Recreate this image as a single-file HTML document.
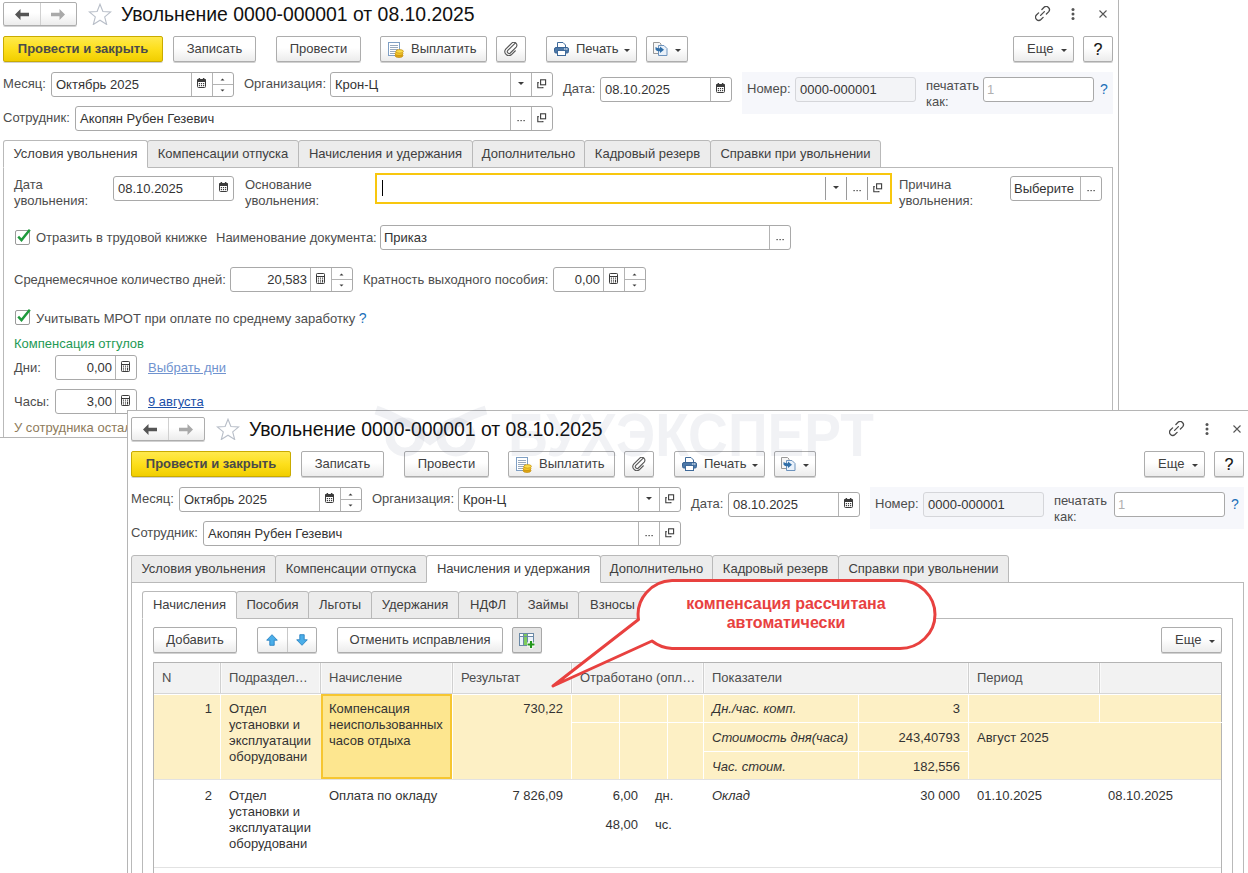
<!DOCTYPE html><html><head><meta charset="utf-8"><style>
*{margin:0;padding:0}
svg{display:block}
html,body{width:1248px;height:873px;overflow:hidden;background:#fff}
body{position:relative;font-family:"Liberation Sans",sans-serif;font-size:13px;color:#333}
.a{position:absolute}
.t{position:absolute;white-space:nowrap;line-height:16px;color:#4d4d4d}
.title{font-size:19.4px;line-height:22px;color:#111}
.btn{position:absolute;box-sizing:border-box;border:1px solid #adadad;border-radius:2px;background:linear-gradient(#fff 0%,#fff 45%,#ececec 100%);box-shadow:0 1px 0 rgba(0,0,0,.18);display:flex;align-items:center;justify-content:center;color:#404040;white-space:nowrap;line-height:16px}
.btn.yel{background:linear-gradient(#ffe94d 0%,#fddf1c 50%,#f1ce00 100%);border-color:#c9ab00;font-weight:bold;color:#4a4a4a}
.btn.q{color:#111;font-size:16px;padding-top:2px;-webkit-text-stroke:0.15px #111}
.fld{position:absolute;box-sizing:border-box;border:1px solid #a9a9a9;border-radius:3px;background:#fff}
.fld.ro{background:#f3f4f7;border-color:#d5d6da}
.ft{position:absolute;display:flex;align-items:center;padding-top:1px;box-sizing:border-box;white-space:nowrap;color:#333;line-height:16px}
.ic{position:absolute;display:flex;align-items:center;justify-content:center}
.lbl{color:#4d4d4d}
.qm{color:#1b6fb8;font-size:14px}
.tab{position:absolute;box-sizing:border-box;border:1px solid #b9b9b9;border-radius:3px 3px 0 0;background:#ececec;display:flex;align-items:center;justify-content:center;color:#404040;white-space:nowrap;padding-bottom:1px}
.tab.act{background:#fff;border-bottom-color:#fff;z-index:2}
.lnk{color:#1a4fa8;text-decoration:underline}
.lnk2{color:#7093cf;text-decoration:underline}
.green{color:#1e9a55}
.tan{color:#8e7b5b}
.hd{color:#4d4d4d}
.bt{color:#404040}
.cell{color:#333}
.it{font-style:italic}
.dda{display:inline-flex;margin-left:8px;width:7px;height:4px}
.btn.pressed{background:#e4e4e4;border-color:#a8a8a8;border-radius:2px}
</style></head><body>
<div class="btn " style="left:3px;top:2px;width:74px;height:24px;"></div>
<div class="a" style="left:40px;top:3px;width:1px;height:22px;background:#d0d0d0"></div>
<div class="a " style="left:15px;top:9px;width:15px;height:11px;"><svg width="15" height="11" viewBox="0 0 15 11"><path d="M0 5.5L5.5 0v3.8H14v3.4H5.5V11z" fill="#555"/></svg></div>
<div class="a " style="left:50px;top:9px;width:15px;height:11px;"><svg width="15" height="11" viewBox="0 0 15 11"><path d="M15 5.5L9.5 0v3.8H1v3.4h8.5V11z" fill="#a9a9a9"/></svg></div>
<div class="a " style="left:88px;top:3px;width:24px;height:22px;"><svg width="24" height="22" viewBox="0 0 24 22"><path d="M12 1.2l2.9 7.3 7.8.4-6 5 2 7.6L12 17.2l-6.7 4.3 2-7.6-6-5 7.8-.4z" fill="none" stroke="#b8bec8" stroke-width="1.1"/></svg></div>
<div class="t title" style="left:121px;top:3px;">Увольнение 0000-000001 от 08.10.2025</div>
<div class="a " style="left:1035px;top:6px;width:16px;height:16px;"><svg width="16" height="16" viewBox="0 0 16 16"><g fill="none" stroke="#4a4a4a" stroke-width="1.3" stroke-linecap="round"><path d="M6.9 3.5L9.04 1.34A3.2 3.2 0 0 1 13.56 5.86L11.4 8"/><path d="M8.1 11.4L5.96 13.56A3.2 3.2 0 0 1 1.44 9.04L3.6 6.9"/><path d="M5.6 9.4L9.4 5.6"/></g></svg></div>
<div class="a " style="left:1071px;top:8px;width:4px;height:12px;"><svg width="4" height="12" viewBox="0 0 4 12"><g fill="#555"><circle cx="2" cy="1.6" r="1.5"/><circle cx="2" cy="6" r="1.5"/><circle cx="2" cy="10.4" r="1.5"/></g></svg></div>
<div class="a " style="left:1099px;top:10px;width:8px;height:8px;"><svg width="8" height="8" viewBox="0 0 8 8"><path d="M0.5 0.5l7 7M7.5 0.5l-7 7" stroke="#555" stroke-width="1.1"/></svg></div>
<div class="btn yel" style="left:3px;top:36px;width:160px;height:26px;">Провести и закрыть</div>
<div class="btn " style="left:173px;top:36px;width:83px;height:26px;">Записать</div>
<div class="btn " style="left:276px;top:36px;width:85px;height:26px;">Провести</div>
<div class="btn " style="left:380px;top:36px;width:107px;height:26px;"></div>
<div class="a " style="left:387px;top:42px;width:17px;height:16px;"><svg width="17" height="16" viewBox="0 0 17 16"><rect x="1.5" y="0.5" width="11" height="13" fill="#fff" stroke="#7f9fc4"/><g stroke="#98a9bd" stroke-width="1"><path d="M3 3.5h8M3 5.5h8M3 7.5h8M3 9.5h7M3 11.5h6"/></g><g stroke="#c08a0c" stroke-width=".7"><ellipse cx="12" cy="13.6" rx="4" ry="1.9" fill="#e0a815"/><ellipse cx="12" cy="11.6" rx="4" ry="1.9" fill="#f5c92a"/><ellipse cx="12.6" cy="9.4" rx="3.8" ry="1.8" fill="#fbdc4a"/></g></svg></div>
<div class="t bt" style="left:411px;top:41px;">Выплатить</div>
<div class="btn " style="left:496px;top:36px;width:30px;height:26px;"><svg width="14" height="14" viewBox="0 0 14 14"><path d="M11.5 0.8L3.6 8.7a1.8 1.8 0 0 0 2.5 2.5l6.1-6.1a3 3 0 0 0-4.2-4.2L1.7 7.2a4 4 0 0 0 5.6 5.6l4.3-4.3" fill="none" stroke="#555" stroke-width="1.1"/></svg></div>
<div class="btn " style="left:546px;top:36px;width:91px;height:26px;"></div>
<div class="a " style="left:554px;top:42px;width:15px;height:14px;"><svg width="15" height="14" viewBox="0 0 15 14"><path d="M3.5 5V0.5h5.5l2.5 2.5V5" fill="#fff" stroke="#3f6a9a"/><rect x="0.5" y="5.5" width="14" height="5.5" rx="1.5" fill="#4c78a8" stroke="#3a6494"/><rect x="3.5" y="8.5" width="8" height="5" fill="#fff" stroke="#3f6a9a"/><rect x="10" y="6.5" width="1.5" height="1" fill="#fff"/><rect x="12" y="6.5" width="1.5" height="1" fill="#fff"/></svg></div>
<div class="t bt" style="left:576px;top:41px;">Печать</div>
<div class="a " style="left:624px;top:49px;width:6px;height:3px;"><svg width="6" height="3" viewBox="0 0 6 3"><path d="M0 0h6L3 3z" fill="#3c3c3c"/></svg></div>
<div class="btn " style="left:646px;top:36px;width:42px;height:26px;"></div>
<div class="a " style="left:653px;top:42px;width:15px;height:14px;"><svg width="15" height="14" viewBox="0 0 15 14"><path d="M0.5 0.5h6l1.5 1.5v9.5h-7.5z" fill="#f6f6f6" stroke="#999"/><path d="M5.5 3.5h5.5l3 3v7h-8.5z" fill="#e9f1fa" stroke="#6d93bd"/><path d="M2.5 7.5c1 1.5 2.5 1.8 4.5 1.8V11l4-3.2-4-3.2v1.6c-1.6 0-3.2-.5-4.5-1.3z" fill="#2f6ea8"/></svg></div>
<div class="a " style="left:675px;top:49px;width:6px;height:3px;"><svg width="6" height="3" viewBox="0 0 6 3"><path d="M0 0h6L3 3z" fill="#3c3c3c"/></svg></div>
<div class="btn " style="left:1013px;top:36px;width:61px;height:26px;"></div>
<div class="t bt" style="left:1027px;top:41px;">Еще</div>
<div class="a " style="left:1061px;top:49px;width:6px;height:3px;"><svg width="6" height="3" viewBox="0 0 6 3"><path d="M0 0h6L3 3z" fill="#3c3c3c"/></svg></div>
<div class="btn q" style="left:1083px;top:36px;width:30px;height:26px;">?</div>
<div class="t lbl" style="left:3px;top:76px;">Месяц:</div>
<div class="fld " style="left:51px;top:72px;width:183px;height:25px;"></div>
<div class="a" style="left:191px;top:73px;width:1px;height:23px;background:#b3b3b3"></div>
<div class="a" style="left:212px;top:73px;width:1px;height:23px;background:#b3b3b3"></div>
<div class="ft" style="left:56px;top:72px;height:25px;">Октябрь 2025</div>
<div class="a " style="left:197px;top:78px;width:9px;height:10px;"><svg width="9" height="10" viewBox="0 0 9 10"><rect x="0.5" y="1.5" width="8" height="8" rx="1" fill="#fff" stroke="#3c3c3c"/><rect x="0" y="1" width="9" height="3" rx="1" fill="#3c3c3c"/><rect x="1.6" y="0" width="1.5" height="1.6" fill="#3c3c3c"/><rect x="5.9" y="0" width="1.5" height="1.6" fill="#3c3c3c"/><g fill="#3c3c3c"><rect x="1.8" y="5" width="1.2" height="1.2"/><rect x="3.9" y="5" width="1.2" height="1.2"/><rect x="6" y="5" width="1.2" height="1.2"/><rect x="1.8" y="7" width="1.2" height="1.2"/><rect x="3.9" y="7" width="1.2" height="1.2"/><rect x="6" y="7" width="1.2" height="1.2"/></g></svg></div>
<div class="a" style="left:213px;top:84px;width:20px;height:1px;background:#b3b3b3"></div>
<div class="a " style="left:220px;top:78px;width:5px;height:3px;"><svg width="5" height="3" viewBox="0 0 5 3"><path d="M0.5 2.6h4L2.5 0.4z" fill="#3c3c3c"/></svg></div>
<div class="a " style="left:220px;top:89px;width:5px;height:3px;"><svg width="5" height="3" viewBox="0 0 5 3"><path d="M0.5 0.4h4L2.5 2.6z" fill="#3c3c3c"/></svg></div>
<div class="t lbl" style="left:244px;top:76px;">Организация:</div>
<div class="fld " style="left:330px;top:72px;width:223px;height:25px;"></div>
<div class="a" style="left:510px;top:73px;width:1px;height:23px;background:#b3b3b3"></div>
<div class="a" style="left:531px;top:73px;width:1px;height:23px;background:#b3b3b3"></div>
<div class="ft" style="left:335px;top:72px;height:25px;">Крон-Ц</div>
<div class="a " style="left:518px;top:82px;width:6px;height:3px;"><svg width="6" height="3" viewBox="0 0 6 3"><path d="M0 0h6L3 3z" fill="#3c3c3c"/></svg></div>
<div class="a " style="left:537px;top:79px;width:10px;height:10px;"><svg width="10" height="10" viewBox="0 0 10 10"><path d="M1.8 3.6H0.8V8.8H5.9V7.9" fill="none" stroke="#3c3c3c" stroke-width="1.1"/><rect x="3.6" y="0.8" width="5" height="5" fill="none" stroke="#3c3c3c" stroke-width="1.1"/></svg></div>
<div class="t lbl" style="left:563px;top:81px;">Дата:</div>
<div class="fld " style="left:600px;top:77px;width:132px;height:25px;"></div>
<div class="a" style="left:710px;top:78px;width:1px;height:23px;background:#b3b3b3"></div>
<div class="ft" style="left:605px;top:77px;height:25px;">08.10.2025</div>
<div class="a " style="left:716px;top:83px;width:9px;height:10px;"><svg width="9" height="10" viewBox="0 0 9 10"><rect x="0.5" y="1.5" width="8" height="8" rx="1" fill="#fff" stroke="#3c3c3c"/><rect x="0" y="1" width="9" height="3" rx="1" fill="#3c3c3c"/><rect x="1.6" y="0" width="1.5" height="1.6" fill="#3c3c3c"/><rect x="5.9" y="0" width="1.5" height="1.6" fill="#3c3c3c"/><g fill="#3c3c3c"><rect x="1.8" y="5" width="1.2" height="1.2"/><rect x="3.9" y="5" width="1.2" height="1.2"/><rect x="6" y="5" width="1.2" height="1.2"/><rect x="1.8" y="7" width="1.2" height="1.2"/><rect x="3.9" y="7" width="1.2" height="1.2"/><rect x="6" y="7" width="1.2" height="1.2"/></g></svg></div>
<div class="a " style="left:742px;top:72px;width:371px;height:42px;background:#f6f7fb"></div>
<div class="t lbl" style="left:747px;top:81px;">Номер:</div>
<div class="fld ro" style="left:795px;top:77px;width:121px;height:25px;"></div>
<div class="ft" style="left:800px;top:77px;height:25px;">0000-000001</div>
<div class="t lbl" style="left:926px;top:78px;line-height:16px">печатать<br>как:</div>
<div class="fld " style="left:983px;top:77px;width:111px;height:25px;"></div>
<div class="ft" style="left:987px;top:77px;height:25px;color:#b0b0b0;">1</div>
<div class="t qm" style="left:1100px;top:81px;">?</div>
<div class="t lbl" style="left:3px;top:110px;">Сотрудник:</div>
<div class="fld " style="left:75px;top:106px;width:478px;height:25px;"></div>
<div class="a" style="left:510px;top:107px;width:1px;height:23px;background:#b3b3b3"></div>
<div class="a" style="left:531px;top:107px;width:1px;height:23px;background:#b3b3b3"></div>
<div class="ft" style="left:80px;top:106px;height:25px;">Акопян Рубен Гезевич</div>
<div class="a " style="left:516px;top:119px;width:10px;height:3px;"><svg width="10" height="3" viewBox="0 0 10 3"><g fill="#333"><rect x="1.5" y="1" width="1.2" height="1.2"/><rect x="4.5" y="1" width="1.2" height="1.2"/><rect x="7.5" y="1" width="1.2" height="1.2"/></g></svg></div>
<div class="a " style="left:537px;top:113px;width:10px;height:10px;"><svg width="10" height="10" viewBox="0 0 10 10"><path d="M1.8 3.6H0.8V8.8H5.9V7.9" fill="none" stroke="#3c3c3c" stroke-width="1.1"/><rect x="3.6" y="0.8" width="5" height="5" fill="none" stroke="#3c3c3c" stroke-width="1.1"/></svg></div>
<div class="tab act" style="left:3px;top:140px;width:145px;height:28px">Условия увольнения</div>
<div class="tab" style="left:147px;top:140px;width:152px;height:28px">Компенсации отпуска</div>
<div class="tab" style="left:298px;top:140px;width:175px;height:28px">Начисления и удержания</div>
<div class="tab" style="left:472px;top:140px;width:113px;height:28px">Дополнительно</div>
<div class="tab" style="left:584px;top:140px;width:127px;height:28px">Кадровый резерв</div>
<div class="tab" style="left:710px;top:140px;width:171px;height:28px">Справки при увольнении</div>
<div class="a" style="left:1118px;top:0px;width:1px;height:411px;background:#b5b5b5"></div>
<div class="a" style="left:3px;top:167px;width:1110px;height:300px;box-sizing:border-box;border:1px solid #b9b9b9;border-bottom:none"></div>
<div class="t lbl" style="left:14px;top:177px;">Дата<br>увольнения:</div>
<div class="fld " style="left:113px;top:176px;width:121px;height:25px;"></div>
<div class="a" style="left:213px;top:177px;width:1px;height:23px;background:#b3b3b3"></div>
<div class="ft" style="left:118px;top:176px;height:25px;">08.10.2025</div>
<div class="a " style="left:219px;top:182px;width:9px;height:10px;"><svg width="9" height="10" viewBox="0 0 9 10"><rect x="0.5" y="1.5" width="8" height="8" rx="1" fill="#fff" stroke="#3c3c3c"/><rect x="0" y="1" width="9" height="3" rx="1" fill="#3c3c3c"/><rect x="1.6" y="0" width="1.5" height="1.6" fill="#3c3c3c"/><rect x="5.9" y="0" width="1.5" height="1.6" fill="#3c3c3c"/><g fill="#3c3c3c"><rect x="1.8" y="5" width="1.2" height="1.2"/><rect x="3.9" y="5" width="1.2" height="1.2"/><rect x="6" y="5" width="1.2" height="1.2"/><rect x="1.8" y="7" width="1.2" height="1.2"/><rect x="3.9" y="7" width="1.2" height="1.2"/><rect x="6" y="7" width="1.2" height="1.2"/></g></svg></div>
<div class="t lbl" style="left:245px;top:177px;">Основание<br>увольнения:</div>
<div class="a" style="left:375px;top:173px;width:517px;height:31px;box-sizing:border-box;border:2px solid #f8c70e;background:#fff"></div>
<div class="a" style="left:825px;top:177px;width:1px;height:23px;background:#9a9a9a"></div>
<div class="a" style="left:846px;top:177px;width:1px;height:23px;background:#9a9a9a"></div>
<div class="a" style="left:867px;top:177px;width:1px;height:23px;background:#9a9a9a"></div>
<div class="a" style="left:382px;top:180px;width:1px;height:16px;background:#000"></div>
<div class="a " style="left:833px;top:186px;width:6px;height:3px;"><svg width="6" height="3" viewBox="0 0 6 3"><path d="M0 0h6L3 3z" fill="#3c3c3c"/></svg></div>
<div class="a " style="left:852px;top:189px;width:10px;height:3px;"><svg width="10" height="3" viewBox="0 0 10 3"><g fill="#333"><rect x="1.5" y="1" width="1.2" height="1.2"/><rect x="4.5" y="1" width="1.2" height="1.2"/><rect x="7.5" y="1" width="1.2" height="1.2"/></g></svg></div>
<div class="a " style="left:873px;top:183px;width:10px;height:10px;"><svg width="10" height="10" viewBox="0 0 10 10"><path d="M1.8 3.6H0.8V8.8H5.9V7.9" fill="none" stroke="#3c3c3c" stroke-width="1.1"/><rect x="3.6" y="0.8" width="5" height="5" fill="none" stroke="#3c3c3c" stroke-width="1.1"/></svg></div>
<div class="t lbl" style="left:899px;top:177px;">Причина<br>увольнения:</div>
<div class="fld " style="left:1010px;top:176px;width:92px;height:25px;"></div>
<div class="a" style="left:1080px;top:177px;width:1px;height:23px;background:#b3b3b3"></div>
<div class="ft" style="left:1014px;top:176px;height:25px;">Выберите</div>
<div class="a " style="left:1086px;top:189px;width:10px;height:3px;"><svg width="10" height="3" viewBox="0 0 10 3"><g fill="#333"><rect x="1.5" y="1" width="1.2" height="1.2"/><rect x="4.5" y="1" width="1.2" height="1.2"/><rect x="7.5" y="1" width="1.2" height="1.2"/></g></svg></div>
<div class="a " style="left:15px;top:228px;width:17px;height:17px;"><svg width="17" height="17" viewBox="0 0 17 17"><rect x="0.5" y="2.5" width="14" height="14" rx="1.5" fill="#fff" stroke="#9a9a9a"/><path d="M3.2 8.6l3.3 3.5L14.8 1.8" fill="none" stroke="#1e9a3c" stroke-width="2.4"/></svg></div>
<div class="t lbl" style="left:36px;top:230px;">Отразить в трудовой книжке</div>
<div class="t lbl" style="left:216px;top:230px;">Наименование документа:</div>
<div class="fld " style="left:380px;top:225px;width:411px;height:25px;"></div>
<div class="a" style="left:769px;top:226px;width:1px;height:23px;background:#b3b3b3"></div>
<div class="ft" style="left:384px;top:225px;height:25px;">Приказ</div>
<div class="a " style="left:775px;top:238px;width:10px;height:3px;"><svg width="10" height="3" viewBox="0 0 10 3"><g fill="#333"><rect x="1.5" y="1" width="1.2" height="1.2"/><rect x="4.5" y="1" width="1.2" height="1.2"/><rect x="7.5" y="1" width="1.2" height="1.2"/></g></svg></div>
<div class="t lbl" style="left:14px;top:272px;">Среднемесячное количество дней:</div>
<div class="fld " style="left:230px;top:267px;width:123px;height:25px;"></div>
<div class="a" style="left:310px;top:268px;width:1px;height:23px;background:#b3b3b3"></div>
<div class="a" style="left:331px;top:268px;width:1px;height:23px;background:#b3b3b3"></div>
<div class="ft" style="left:231px;width:76px;top:267px;height:25px;justify-content:flex-end;">20,583</div>
<div class="a " style="left:316px;top:273px;width:9px;height:11px;"><svg width="9" height="11" viewBox="0 0 9 11"><rect x="0.5" y="0.5" width="8" height="10" rx="0.8" fill="#fff" stroke="#3c3c3c"/><path d="M1 3.5h7" stroke="#3c3c3c"/><g fill="#3c3c3c"><rect x="1.9" y="4.6" width="1.1" height="1.1"/><rect x="3.95" y="4.6" width="1.1" height="1.1"/><rect x="6" y="4.6" width="1.1" height="1.1"/><rect x="1.9" y="6.6" width="1.1" height="1.1"/><rect x="3.95" y="6.6" width="1.1" height="1.1"/><rect x="1.9" y="8.4" width="1.1" height="1.1"/><rect x="3.95" y="8.4" width="1.1" height="1.1"/><rect x="6" y="6.6" width="1.1" height="2.9"/></g></svg></div>
<div class="a" style="left:332px;top:279px;width:20px;height:1px;background:#b3b3b3"></div>
<div class="a " style="left:339px;top:273px;width:5px;height:3px;"><svg width="5" height="3" viewBox="0 0 5 3"><path d="M0.5 2.6h4L2.5 0.4z" fill="#3c3c3c"/></svg></div>
<div class="a " style="left:339px;top:284px;width:5px;height:3px;"><svg width="5" height="3" viewBox="0 0 5 3"><path d="M0.5 0.4h4L2.5 2.6z" fill="#3c3c3c"/></svg></div>
<div class="t lbl" style="left:363px;top:272px;">Кратность выходного пособия:</div>
<div class="fld " style="left:553px;top:267px;width:93px;height:25px;"></div>
<div class="a" style="left:603px;top:268px;width:1px;height:23px;background:#b3b3b3"></div>
<div class="a" style="left:624px;top:268px;width:1px;height:23px;background:#b3b3b3"></div>
<div class="ft" style="left:554px;width:46px;top:267px;height:25px;justify-content:flex-end;">0,00</div>
<div class="a " style="left:609px;top:273px;width:9px;height:11px;"><svg width="9" height="11" viewBox="0 0 9 11"><rect x="0.5" y="0.5" width="8" height="10" rx="0.8" fill="#fff" stroke="#3c3c3c"/><path d="M1 3.5h7" stroke="#3c3c3c"/><g fill="#3c3c3c"><rect x="1.9" y="4.6" width="1.1" height="1.1"/><rect x="3.95" y="4.6" width="1.1" height="1.1"/><rect x="6" y="4.6" width="1.1" height="1.1"/><rect x="1.9" y="6.6" width="1.1" height="1.1"/><rect x="3.95" y="6.6" width="1.1" height="1.1"/><rect x="1.9" y="8.4" width="1.1" height="1.1"/><rect x="3.95" y="8.4" width="1.1" height="1.1"/><rect x="6" y="6.6" width="1.1" height="2.9"/></g></svg></div>
<div class="a" style="left:625px;top:279px;width:20px;height:1px;background:#b3b3b3"></div>
<div class="a " style="left:632px;top:273px;width:5px;height:3px;"><svg width="5" height="3" viewBox="0 0 5 3"><path d="M0.5 2.6h4L2.5 0.4z" fill="#3c3c3c"/></svg></div>
<div class="a " style="left:632px;top:284px;width:5px;height:3px;"><svg width="5" height="3" viewBox="0 0 5 3"><path d="M0.5 0.4h4L2.5 2.6z" fill="#3c3c3c"/></svg></div>
<div class="a " style="left:15px;top:308px;width:17px;height:17px;"><svg width="17" height="17" viewBox="0 0 17 17"><rect x="0.5" y="2.5" width="14" height="14" rx="1.5" fill="#fff" stroke="#9a9a9a"/><path d="M3.2 8.6l3.3 3.5L14.8 1.8" fill="none" stroke="#1e9a3c" stroke-width="2.4"/></svg></div>
<div class="t lbl" style="left:36px;top:310px;">Учитывать МРОТ при оплате по среднему заработку <span class="qm">?</span></div>
<div class="t green" style="left:14px;top:336px;">Компенсация отгулов</div>
<div class="t lbl" style="left:14px;top:360px;">Дни:</div>
<div class="fld " style="left:55px;top:355px;width:82px;height:25px;"></div>
<div class="a" style="left:115px;top:356px;width:1px;height:23px;background:#b3b3b3"></div>
<div class="ft" style="left:56px;width:56px;top:355px;height:25px;justify-content:flex-end;">0,00</div>
<div class="a " style="left:121px;top:361px;width:9px;height:11px;"><svg width="9" height="11" viewBox="0 0 9 11"><rect x="0.5" y="0.5" width="8" height="10" rx="0.8" fill="#fff" stroke="#3c3c3c"/><path d="M1 3.5h7" stroke="#3c3c3c"/><g fill="#3c3c3c"><rect x="1.9" y="4.6" width="1.1" height="1.1"/><rect x="3.95" y="4.6" width="1.1" height="1.1"/><rect x="6" y="4.6" width="1.1" height="1.1"/><rect x="1.9" y="6.6" width="1.1" height="1.1"/><rect x="3.95" y="6.6" width="1.1" height="1.1"/><rect x="1.9" y="8.4" width="1.1" height="1.1"/><rect x="3.95" y="8.4" width="1.1" height="1.1"/><rect x="6" y="6.6" width="1.1" height="2.9"/></g></svg></div>
<div class="t lnk2" style="left:148px;top:360px;">Выбрать дни</div>
<div class="t lbl" style="left:14px;top:394px;">Часы:</div>
<div class="fld " style="left:55px;top:389px;width:82px;height:25px;"></div>
<div class="a" style="left:115px;top:390px;width:1px;height:23px;background:#b3b3b3"></div>
<div class="ft" style="left:56px;width:56px;top:389px;height:25px;justify-content:flex-end;">3,00</div>
<div class="a " style="left:121px;top:395px;width:9px;height:11px;"><svg width="9" height="11" viewBox="0 0 9 11"><rect x="0.5" y="0.5" width="8" height="10" rx="0.8" fill="#fff" stroke="#3c3c3c"/><path d="M1 3.5h7" stroke="#3c3c3c"/><g fill="#3c3c3c"><rect x="1.9" y="4.6" width="1.1" height="1.1"/><rect x="3.95" y="4.6" width="1.1" height="1.1"/><rect x="6" y="4.6" width="1.1" height="1.1"/><rect x="1.9" y="6.6" width="1.1" height="1.1"/><rect x="3.95" y="6.6" width="1.1" height="1.1"/><rect x="1.9" y="8.4" width="1.1" height="1.1"/><rect x="3.95" y="8.4" width="1.1" height="1.1"/><rect x="6" y="6.6" width="1.1" height="2.9"/></g></svg></div>
<div class="t lnk" style="left:148px;top:394px;">9 августа</div>
<div class="t tan" style="left:14px;top:420px;">У сотрудника остались неиспользованные часы</div>
<div class="a" style="left:0px;top:437px;width:1119px;height:1px;background:#b5b5b5"></div>
<div class="a" style="left:0;top:438px;width:1248px;height:435px;background:#fff"></div>
<div class="a" style="left:127px;top:410px;width:1121px;height:463px;background:#fff;box-sizing:border-box;border-left:1px solid #b5b5b5;border-top:1px solid #b5b5b5"></div>
<div class="btn " style="left:131px;top:417px;width:74px;height:24px;"></div>
<div class="a" style="left:168px;top:418px;width:1px;height:22px;background:#d0d0d0"></div>
<div class="a " style="left:143px;top:424px;width:15px;height:11px;"><svg width="15" height="11" viewBox="0 0 15 11"><path d="M0 5.5L5.5 0v3.8H14v3.4H5.5V11z" fill="#555"/></svg></div>
<div class="a " style="left:178px;top:424px;width:15px;height:11px;"><svg width="15" height="11" viewBox="0 0 15 11"><path d="M15 5.5L9.5 0v3.8H1v3.4h8.5V11z" fill="#a9a9a9"/></svg></div>
<div class="a " style="left:216px;top:418px;width:24px;height:22px;"><svg width="24" height="22" viewBox="0 0 24 22"><path d="M12 1.2l2.9 7.3 7.8.4-6 5 2 7.6L12 17.2l-6.7 4.3 2-7.6-6-5 7.8-.4z" fill="none" stroke="#b8bec8" stroke-width="1.1"/></svg></div>
<div class="t title" style="left:249px;top:418px;">Увольнение 0000-000001 от 08.10.2025</div>
<div class="a " style="left:1169px;top:421px;width:16px;height:16px;"><svg width="16" height="16" viewBox="0 0 16 16"><g fill="none" stroke="#4a4a4a" stroke-width="1.3" stroke-linecap="round"><path d="M6.9 3.5L9.04 1.34A3.2 3.2 0 0 1 13.56 5.86L11.4 8"/><path d="M8.1 11.4L5.96 13.56A3.2 3.2 0 0 1 1.44 9.04L3.6 6.9"/><path d="M5.6 9.4L9.4 5.6"/></g></svg></div>
<div class="a " style="left:1205px;top:423px;width:4px;height:12px;"><svg width="4" height="12" viewBox="0 0 4 12"><g fill="#555"><circle cx="2" cy="1.6" r="1.5"/><circle cx="2" cy="6" r="1.5"/><circle cx="2" cy="10.4" r="1.5"/></g></svg></div>
<div class="a " style="left:1233px;top:425px;width:8px;height:8px;"><svg width="8" height="8" viewBox="0 0 8 8"><path d="M0.5 0.5l7 7M7.5 0.5l-7 7" stroke="#555" stroke-width="1.1"/></svg></div>
<div class="btn yel" style="left:131px;top:451px;width:160px;height:26px;">Провести и закрыть</div>
<div class="btn " style="left:301px;top:451px;width:83px;height:26px;">Записать</div>
<div class="btn " style="left:404px;top:451px;width:85px;height:26px;">Провести</div>
<div class="btn " style="left:508px;top:451px;width:107px;height:26px;"></div>
<div class="a " style="left:515px;top:457px;width:17px;height:16px;"><svg width="17" height="16" viewBox="0 0 17 16"><rect x="1.5" y="0.5" width="11" height="13" fill="#fff" stroke="#7f9fc4"/><g stroke="#98a9bd" stroke-width="1"><path d="M3 3.5h8M3 5.5h8M3 7.5h8M3 9.5h7M3 11.5h6"/></g><g stroke="#c08a0c" stroke-width=".7"><ellipse cx="12" cy="13.6" rx="4" ry="1.9" fill="#e0a815"/><ellipse cx="12" cy="11.6" rx="4" ry="1.9" fill="#f5c92a"/><ellipse cx="12.6" cy="9.4" rx="3.8" ry="1.8" fill="#fbdc4a"/></g></svg></div>
<div class="t bt" style="left:539px;top:456px;">Выплатить</div>
<div class="btn " style="left:624px;top:451px;width:30px;height:26px;"><svg width="14" height="14" viewBox="0 0 14 14"><path d="M11.5 0.8L3.6 8.7a1.8 1.8 0 0 0 2.5 2.5l6.1-6.1a3 3 0 0 0-4.2-4.2L1.7 7.2a4 4 0 0 0 5.6 5.6l4.3-4.3" fill="none" stroke="#555" stroke-width="1.1"/></svg></div>
<div class="btn " style="left:674px;top:451px;width:91px;height:26px;"></div>
<div class="a " style="left:682px;top:457px;width:15px;height:14px;"><svg width="15" height="14" viewBox="0 0 15 14"><path d="M3.5 5V0.5h5.5l2.5 2.5V5" fill="#fff" stroke="#3f6a9a"/><rect x="0.5" y="5.5" width="14" height="5.5" rx="1.5" fill="#4c78a8" stroke="#3a6494"/><rect x="3.5" y="8.5" width="8" height="5" fill="#fff" stroke="#3f6a9a"/><rect x="10" y="6.5" width="1.5" height="1" fill="#fff"/><rect x="12" y="6.5" width="1.5" height="1" fill="#fff"/></svg></div>
<div class="t bt" style="left:704px;top:456px;">Печать</div>
<div class="a " style="left:752px;top:464px;width:6px;height:3px;"><svg width="6" height="3" viewBox="0 0 6 3"><path d="M0 0h6L3 3z" fill="#3c3c3c"/></svg></div>
<div class="btn " style="left:774px;top:451px;width:42px;height:26px;"></div>
<div class="a " style="left:781px;top:457px;width:15px;height:14px;"><svg width="15" height="14" viewBox="0 0 15 14"><path d="M0.5 0.5h6l1.5 1.5v9.5h-7.5z" fill="#f6f6f6" stroke="#999"/><path d="M5.5 3.5h5.5l3 3v7h-8.5z" fill="#e9f1fa" stroke="#6d93bd"/><path d="M2.5 7.5c1 1.5 2.5 1.8 4.5 1.8V11l4-3.2-4-3.2v1.6c-1.6 0-3.2-.5-4.5-1.3z" fill="#2f6ea8"/></svg></div>
<div class="a " style="left:803px;top:464px;width:6px;height:3px;"><svg width="6" height="3" viewBox="0 0 6 3"><path d="M0 0h6L3 3z" fill="#3c3c3c"/></svg></div>
<div class="btn " style="left:1144px;top:451px;width:61px;height:26px;"></div>
<div class="t bt" style="left:1158px;top:456px;">Еще</div>
<div class="a " style="left:1192px;top:464px;width:6px;height:3px;"><svg width="6" height="3" viewBox="0 0 6 3"><path d="M0 0h6L3 3z" fill="#3c3c3c"/></svg></div>
<div class="btn q" style="left:1214px;top:451px;width:30px;height:26px;">?</div>
<div class="t lbl" style="left:131px;top:491px;">Месяц:</div>
<div class="fld " style="left:179px;top:487px;width:183px;height:25px;"></div>
<div class="a" style="left:319px;top:488px;width:1px;height:23px;background:#b3b3b3"></div>
<div class="a" style="left:340px;top:488px;width:1px;height:23px;background:#b3b3b3"></div>
<div class="ft" style="left:184px;top:487px;height:25px;">Октябрь 2025</div>
<div class="a " style="left:325px;top:493px;width:9px;height:10px;"><svg width="9" height="10" viewBox="0 0 9 10"><rect x="0.5" y="1.5" width="8" height="8" rx="1" fill="#fff" stroke="#3c3c3c"/><rect x="0" y="1" width="9" height="3" rx="1" fill="#3c3c3c"/><rect x="1.6" y="0" width="1.5" height="1.6" fill="#3c3c3c"/><rect x="5.9" y="0" width="1.5" height="1.6" fill="#3c3c3c"/><g fill="#3c3c3c"><rect x="1.8" y="5" width="1.2" height="1.2"/><rect x="3.9" y="5" width="1.2" height="1.2"/><rect x="6" y="5" width="1.2" height="1.2"/><rect x="1.8" y="7" width="1.2" height="1.2"/><rect x="3.9" y="7" width="1.2" height="1.2"/><rect x="6" y="7" width="1.2" height="1.2"/></g></svg></div>
<div class="a" style="left:341px;top:499px;width:20px;height:1px;background:#b3b3b3"></div>
<div class="a " style="left:348px;top:493px;width:5px;height:3px;"><svg width="5" height="3" viewBox="0 0 5 3"><path d="M0.5 2.6h4L2.5 0.4z" fill="#3c3c3c"/></svg></div>
<div class="a " style="left:348px;top:504px;width:5px;height:3px;"><svg width="5" height="3" viewBox="0 0 5 3"><path d="M0.5 0.4h4L2.5 2.6z" fill="#3c3c3c"/></svg></div>
<div class="t lbl" style="left:372px;top:491px;">Организация:</div>
<div class="fld " style="left:458px;top:487px;width:223px;height:25px;"></div>
<div class="a" style="left:638px;top:488px;width:1px;height:23px;background:#b3b3b3"></div>
<div class="a" style="left:659px;top:488px;width:1px;height:23px;background:#b3b3b3"></div>
<div class="ft" style="left:463px;top:487px;height:25px;">Крон-Ц</div>
<div class="a " style="left:646px;top:497px;width:6px;height:3px;"><svg width="6" height="3" viewBox="0 0 6 3"><path d="M0 0h6L3 3z" fill="#3c3c3c"/></svg></div>
<div class="a " style="left:665px;top:494px;width:10px;height:10px;"><svg width="10" height="10" viewBox="0 0 10 10"><path d="M1.8 3.6H0.8V8.8H5.9V7.9" fill="none" stroke="#3c3c3c" stroke-width="1.1"/><rect x="3.6" y="0.8" width="5" height="5" fill="none" stroke="#3c3c3c" stroke-width="1.1"/></svg></div>
<div class="t lbl" style="left:691px;top:496px;">Дата:</div>
<div class="fld " style="left:728px;top:492px;width:132px;height:25px;"></div>
<div class="a" style="left:838px;top:493px;width:1px;height:23px;background:#b3b3b3"></div>
<div class="ft" style="left:733px;top:492px;height:25px;">08.10.2025</div>
<div class="a " style="left:844px;top:498px;width:9px;height:10px;"><svg width="9" height="10" viewBox="0 0 9 10"><rect x="0.5" y="1.5" width="8" height="8" rx="1" fill="#fff" stroke="#3c3c3c"/><rect x="0" y="1" width="9" height="3" rx="1" fill="#3c3c3c"/><rect x="1.6" y="0" width="1.5" height="1.6" fill="#3c3c3c"/><rect x="5.9" y="0" width="1.5" height="1.6" fill="#3c3c3c"/><g fill="#3c3c3c"><rect x="1.8" y="5" width="1.2" height="1.2"/><rect x="3.9" y="5" width="1.2" height="1.2"/><rect x="6" y="5" width="1.2" height="1.2"/><rect x="1.8" y="7" width="1.2" height="1.2"/><rect x="3.9" y="7" width="1.2" height="1.2"/><rect x="6" y="7" width="1.2" height="1.2"/></g></svg></div>
<div class="a " style="left:870px;top:487px;width:374px;height:42px;background:#f6f7fb"></div>
<div class="t lbl" style="left:875px;top:496px;">Номер:</div>
<div class="fld ro" style="left:923px;top:492px;width:121px;height:25px;"></div>
<div class="ft" style="left:928px;top:492px;height:25px;">0000-000001</div>
<div class="t lbl" style="left:1054px;top:493px;line-height:16px">печатать<br>как:</div>
<div class="fld " style="left:1114px;top:492px;width:111px;height:25px;"></div>
<div class="ft" style="left:1118px;top:492px;height:25px;color:#b0b0b0;">1</div>
<div class="t qm" style="left:1231px;top:496px;">?</div>
<div class="t lbl" style="left:131px;top:525px;">Сотрудник:</div>
<div class="fld " style="left:203px;top:521px;width:478px;height:25px;"></div>
<div class="a" style="left:638px;top:522px;width:1px;height:23px;background:#b3b3b3"></div>
<div class="a" style="left:659px;top:522px;width:1px;height:23px;background:#b3b3b3"></div>
<div class="ft" style="left:208px;top:521px;height:25px;">Акопян Рубен Гезевич</div>
<div class="a " style="left:644px;top:534px;width:10px;height:3px;"><svg width="10" height="3" viewBox="0 0 10 3"><g fill="#333"><rect x="1.5" y="1" width="1.2" height="1.2"/><rect x="4.5" y="1" width="1.2" height="1.2"/><rect x="7.5" y="1" width="1.2" height="1.2"/></g></svg></div>
<div class="a " style="left:665px;top:528px;width:10px;height:10px;"><svg width="10" height="10" viewBox="0 0 10 10"><path d="M1.8 3.6H0.8V8.8H5.9V7.9" fill="none" stroke="#3c3c3c" stroke-width="1.1"/><rect x="3.6" y="0.8" width="5" height="5" fill="none" stroke="#3c3c3c" stroke-width="1.1"/></svg></div>
<div class="tab" style="left:131px;top:555px;width:145px;height:28px">Условия увольнения</div>
<div class="tab" style="left:275px;top:555px;width:152px;height:28px">Компенсации отпуска</div>
<div class="tab act" style="left:426px;top:555px;width:175px;height:28px">Начисления и удержания</div>
<div class="tab" style="left:600px;top:555px;width:113px;height:28px">Дополнительно</div>
<div class="tab" style="left:712px;top:555px;width:127px;height:28px">Кадровый резерв</div>
<div class="tab" style="left:838px;top:555px;width:171px;height:28px">Справки при увольнении</div>
<div class="a" style="left:131px;top:582px;width:1113px;height:300px;box-sizing:border-box;border:1px solid #b9b9b9;border-bottom:none"></div>
<div class="tab act" style="left:142px;top:591px;width:95px;height:28px">Начисления</div>
<div class="tab" style="left:236px;top:591px;width:73px;height:28px">Пособия</div>
<div class="tab" style="left:308px;top:591px;width:64px;height:28px">Льготы</div>
<div class="tab" style="left:371px;top:591px;width:88px;height:28px">Удержания</div>
<div class="tab" style="left:458px;top:591px;width:60px;height:28px">НДФЛ</div>
<div class="tab" style="left:517px;top:591px;width:62px;height:28px">Займы</div>
<div class="tab" style="left:578px;top:591px;width:69px;height:28px">Взносы</div>
<div class="a" style="left:142px;top:618px;width:1091px;height:300px;box-sizing:border-box;border:1px solid #b9b9b9;border-bottom:none"></div>
<div class="btn " style="left:153px;top:627px;width:84px;height:26px;">Добавить</div>
<div class="btn" style="left:257px;top:627px;width:60px;height:26px;justify-content:flex-start"><div style="width:30px;height:24px;display:flex;align-items:center;justify-content:center;border-right:1px solid #c8c8c8"><svg width="12" height="12" viewBox="0 0 12 12"><path d="M6 0.7L11.3 6.2H8.2V11.3H3.8V6.2H0.7z" fill="#4aaee9" stroke="#2b83c2" stroke-width="0.9"/></svg></div><div style="width:29px;height:24px;display:flex;align-items:center;justify-content:center"><svg width="12" height="12" viewBox="0 0 12 12"><path d="M6 11.3L11.3 5.8H8.2V0.7H3.8V5.8H0.7z" fill="#4aaee9" stroke="#2b83c2" stroke-width="0.9"/></svg></div></div>
<div class="btn " style="left:337px;top:627px;width:166px;height:26px;">Отменить исправления</div>
<div class="btn pressed" style="left:512px;top:627px;width:30px;height:26px;"></div>
<div class="a " style="left:519px;top:633px;width:17px;height:16px;"><svg width="17" height="16" viewBox="0 0 17 16"><rect x="0.5" y="0.5" width="14" height="12" fill="#eaf2fa" stroke="#6a89a6"/><rect x="5" y="1" width="3.5" height="11" fill="#7dcc5c"/><rect x="1" y="1" width="3.5" height="2.5" fill="#fff"/><rect x="9" y="1" width="5" height="2.5" fill="#fff"/><path d="M1 3.5h13M4.5 1v11M8.5 1v11" stroke="#6a89a6"/><path d="M12 7.5v8M8 11.5h8" stroke="#fff" stroke-width="4"/><path d="M12 8v7M8.5 11.5h7" stroke="#23961b" stroke-width="2.2"/></svg></div>
<div class="btn " style="left:1161px;top:627px;width:61px;height:26px;"></div>
<div class="t bt" style="left:1175px;top:632px;">Еще</div>
<div class="a " style="left:1209px;top:640px;width:6px;height:3px;"><svg width="6" height="3" viewBox="0 0 6 3"><path d="M0 0h6L3 3z" fill="#3c3c3c"/></svg></div>
<div class="a" style="left:153px;top:662px;width:1069px;height:220px;box-sizing:border-box;border:1px solid #b4b4b4;border-bottom:none"></div>
<div class="a " style="left:154px;top:663px;width:1067px;height:30px;background:#f2f2f2"></div>
<div class="a" style="left:154px;top:693px;width:1067px;height:1px;background:#d6d6d6"></div>
<div class="a" style="left:219px;top:663px;width:1px;height:30px;background:#fafafa"></div>
<div class="a" style="left:220px;top:663px;width:1px;height:30px;background:#d0d0d0"></div>
<div class="a" style="left:221px;top:663px;width:1px;height:30px;background:#fafafa"></div>
<div class="a" style="left:319px;top:663px;width:1px;height:30px;background:#fafafa"></div>
<div class="a" style="left:320px;top:663px;width:1px;height:30px;background:#d0d0d0"></div>
<div class="a" style="left:321px;top:663px;width:1px;height:30px;background:#fafafa"></div>
<div class="a" style="left:451px;top:663px;width:1px;height:30px;background:#fafafa"></div>
<div class="a" style="left:452px;top:663px;width:1px;height:30px;background:#d0d0d0"></div>
<div class="a" style="left:453px;top:663px;width:1px;height:30px;background:#fafafa"></div>
<div class="a" style="left:570px;top:663px;width:1px;height:30px;background:#fafafa"></div>
<div class="a" style="left:571px;top:663px;width:1px;height:30px;background:#d0d0d0"></div>
<div class="a" style="left:572px;top:663px;width:1px;height:30px;background:#fafafa"></div>
<div class="a" style="left:702px;top:663px;width:1px;height:30px;background:#fafafa"></div>
<div class="a" style="left:703px;top:663px;width:1px;height:30px;background:#d0d0d0"></div>
<div class="a" style="left:704px;top:663px;width:1px;height:30px;background:#fafafa"></div>
<div class="a" style="left:967px;top:663px;width:1px;height:30px;background:#fafafa"></div>
<div class="a" style="left:968px;top:663px;width:1px;height:30px;background:#d0d0d0"></div>
<div class="a" style="left:969px;top:663px;width:1px;height:30px;background:#fafafa"></div>
<div class="a" style="left:1098px;top:663px;width:1px;height:30px;background:#fafafa"></div>
<div class="a" style="left:1099px;top:663px;width:1px;height:30px;background:#d0d0d0"></div>
<div class="a" style="left:1100px;top:663px;width:1px;height:30px;background:#fafafa"></div>
<div class="t hd" style="left:162px;top:670px;">N</div>
<div class="t hd" style="left:229px;top:670px;">Подраздел…</div>
<div class="t hd" style="left:329px;top:670px;">Начисление</div>
<div class="t hd" style="left:461px;top:670px;">Результат</div>
<div class="t hd" style="left:580px;top:670px;">Отработано (опл…</div>
<div class="t hd" style="left:712px;top:670px;">Показатели</div>
<div class="t hd" style="left:977px;top:670px;">Период</div>
<div class="a " style="left:154px;top:694px;width:1067px;height:1px;background:#fff"></div>
<div class="a " style="left:154px;top:695px;width:1067px;height:84px;background:#fdf0c5"></div>
<div class="a" style="left:220px;top:694px;width:1px;height:85px;background:#fff"></div>
<div class="a" style="left:452px;top:694px;width:1px;height:85px;background:#fff"></div>
<div class="a" style="left:571px;top:694px;width:1px;height:85px;background:#fff"></div>
<div class="a" style="left:619px;top:694px;width:1px;height:85px;background:#fff"></div>
<div class="a" style="left:667px;top:694px;width:1px;height:85px;background:#fff"></div>
<div class="a" style="left:703px;top:694px;width:1px;height:85px;background:#fff"></div>
<div class="a" style="left:858px;top:694px;width:1px;height:85px;background:#fff"></div>
<div class="a" style="left:968px;top:694px;width:1px;height:85px;background:#fff"></div>
<div class="a" style="left:1099px;top:694px;width:1px;height:28px;background:#fff"></div>
<div class="a" style="left:572px;top:722px;width:131px;height:1px;background:#fff"></div>
<div class="a" style="left:704px;top:722px;width:518px;height:1px;background:#fff"></div>
<div class="a" style="left:704px;top:751px;width:264px;height:1px;background:#fff"></div>
<div class="a" style="left:154px;top:779px;width:1067px;height:1px;background:#e2e2e2"></div>
<div class="a" style="left:321px;top:694px;width:131px;height:85px;box-sizing:border-box;border:2px solid #f6c631;background:#fde68f"></div>
<div class="t cell" style="left:190px;top:701px;width:22px;text-align:right">1</div>
<div class="t cell" style="left:229px;top:701px;">Отдел<br>установки и<br>эксплуатации<br>оборудовани</div>
<div class="t cell" style="left:329px;top:701px;">Компенсация<br>неиспользованных<br>часов отдыха</div>
<div class="t cell" style="left:480px;top:701px;width:83px;text-align:right">730,22</div>
<div class="t cell it" style="left:712px;top:701px;">Дн./час. комп.</div>
<div class="t cell" style="left:860px;top:701px;width:100px;text-align:right">3</div>
<div class="t cell it" style="left:712px;top:730px;">Стоимость дня(часа)</div>
<div class="t cell" style="left:860px;top:730px;width:100px;text-align:right">243,40793</div>
<div class="t cell it" style="left:712px;top:759px;">Час. стоим.</div>
<div class="t cell" style="left:860px;top:759px;width:100px;text-align:right">182,556</div>
<div class="t cell" style="left:977px;top:730px;">Август 2025</div>
<div class="t cell" style="left:190px;top:788px;width:22px;text-align:right">2</div>
<div class="t cell" style="left:229px;top:788px;">Отдел<br>установки и<br>эксплуатации<br>оборудовани</div>
<div class="t cell" style="left:329px;top:788px;">Оплата по окладу</div>
<div class="t cell" style="left:480px;top:788px;width:83px;text-align:right">7 826,09</div>
<div class="t cell" style="left:580px;top:788px;width:58px;text-align:right">6,00</div>
<div class="t cell" style="left:655px;top:788px;">дн.</div>
<div class="t cell" style="left:580px;top:817px;width:58px;text-align:right">48,00</div>
<div class="t cell" style="left:655px;top:817px;">чс.</div>
<div class="t cell it" style="left:712px;top:788px;">Оклад</div>
<div class="t cell" style="left:860px;top:788px;width:100px;text-align:right">30 000</div>
<div class="t cell" style="left:977px;top:788px;">01.10.2025</div>
<div class="t cell" style="left:1108px;top:788px;">08.10.2025</div>
<div class="a" style="left:154px;top:867px;width:1067px;height:1px;background:#e2e2e2"></div>
<svg class="a" style="left:540px;top:570px" width="410" height="130" viewBox="540 570 410 130"><path d="M672 580.5 H900 A35 34 0 0 1 900 648.5 H672 A35 34 0 0 1 652 641 L553 686 L638.5 619.5 A35 34 0 0 1 672 580.5 Z" fill="#fff" stroke="#e8413f" stroke-width="3" stroke-linejoin="round"/><text x="786" y="609" text-anchor="middle" font-family="Liberation Sans" font-weight="bold" font-size="16" fill="#e8413f">компенсация рассчитана</text><text x="786" y="628" text-anchor="middle" font-family="Liberation Sans" font-weight="bold" font-size="16" fill="#e8413f">автоматически</text></svg>
<svg class="a" style="left:360px;top:398px;pointer-events:none" width="530" height="70" viewBox="360 398 530 70"><g fill="none" stroke="rgba(60,70,110,0.075)" stroke-width="9"><path d="M376 410 Q 400 418 430 440 Q 460 418 486 410"/><circle cx="405" cy="437" r="15"/><circle cx="456" cy="437" r="15"/></g><text x="508" y="456" font-family="Liberation Sans" font-weight="bold" font-size="61" fill="rgba(60,70,110,0.07)" textLength="366" lengthAdjust="spacingAndGlyphs">БУХЭКСПЕРТ</text></svg>
</body></html>
